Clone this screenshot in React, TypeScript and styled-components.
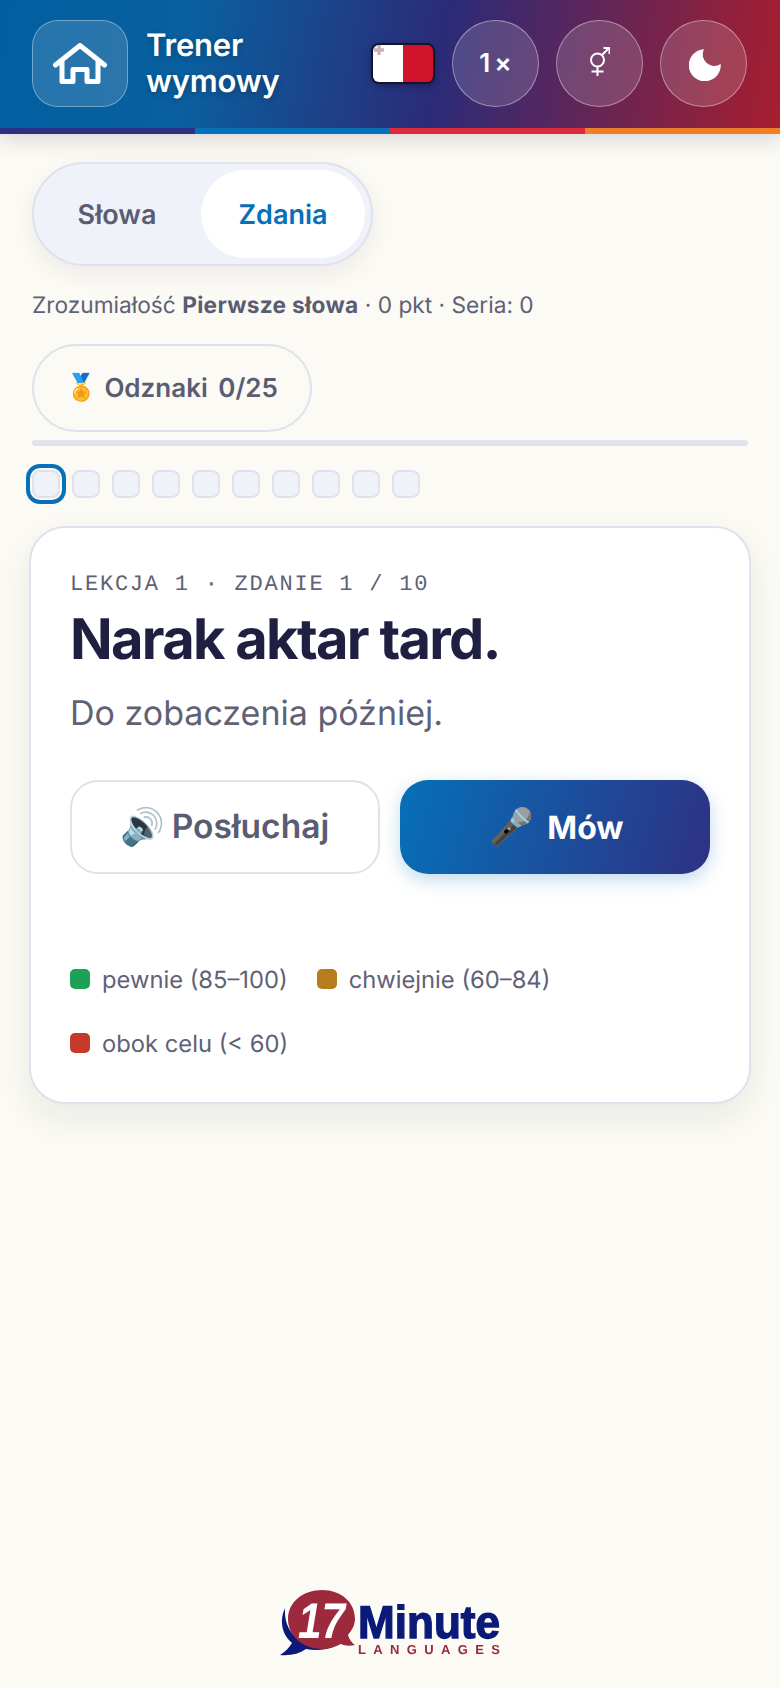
import React from "react";
import styled, { createGlobalStyle } from "styled-components";

const Global = createGlobalStyle`
  html, body { margin: 0; padding: 0; background: #fbfaf4; }
  body { font-family: Inter, "Liberation Sans", sans-serif; width: 780px; height: 1688px; overflow: hidden; text-rendering: geometricPrecision; }
  * { box-sizing: border-box; }
`;

const Page = styled.div`
  width: 780px;
  height: 1688px;
  display: flex;
  flex-direction: column;
  background: #fbfaf4;
`;

const Header = styled.header`
  height: 134px;
  flex: none;
  display: flex;
  flex-direction: column;
  box-shadow: 0 6px 20px rgba(31, 32, 65, 0.16);
`;

const HeaderBar = styled.div`
  height: 128px;
  padding: 20px 33px 21px 32px;
  display: flex;
  align-items: center;
  gap: 18px;
  background: linear-gradient(100deg, #00609f 0%, #0a5f9f 25%, #2b2b78 56%, #a81e2e 100%);
`;

const Stripes = styled.div`
  height: 6px;
  display: grid;
  grid-template-columns: repeat(4, 1fr);
`;

const Stripe = styled.span<{ $c: string }>`
  background: ${(p) => p.$c};
`;

const HomeButton = styled.div`
  width: 96px;
  height: 87px;
  border-radius: 26px;
  border: 1.5px solid rgba(255, 255, 255, 0.35);
  background: rgba(255, 255, 255, 0.14);
  display: flex;
  align-items: center;
  justify-content: center;
  color: #fff;
`;

const Title = styled.div`
  flex: 1;
  color: #fff;
  font-size: 31px;
  font-weight: 600;
  line-height: 36px;
  letter-spacing: -0.2px;
  text-shadow: 0 2px 6px rgba(0, 0, 0, 0.25);
`;

const Controls = styled.div`
  display: flex;
  align-items: center;
  gap: 17px;
`;

const Flag = styled.div`
  position: relative;
  width: 64px;
  height: 41px;
  border: 2px solid #14142c;
  border-radius: 8px;
  overflow: hidden;
  display: grid;
  grid-template-columns: 1fr 1fr;
  box-shadow: 0 2px 6px rgba(0, 0, 0, 0.3);
`;

const FlagWhite = styled.span`
  background: #fff;
`;

const FlagRed = styled.span`
  background: #cf142b;
`;

const GeorgeCross = styled.svg`
  position: absolute;
  left: 1px;
  top: 0;
`;

const RoundButton = styled.div`
  width: 87px;
  height: 87px;
  border-radius: 50%;
  border: 1.5px solid rgba(255, 255, 255, 0.38);
  background: rgba(255, 255, 255, 0.15);
  color: #fff;
  display: flex;
  align-items: center;
  justify-content: center;
  font-size: 26px;
  font-weight: 600;
  letter-spacing: 4px;
  padding-left: 4px;
`;

const IconRoundButton = styled(RoundButton)`
  padding-left: 0;
`;

const GenderSvg = styled.svg`
  margin-bottom: 4px;
`;

const MoonSvg = styled.svg`
  margin: 3px 0 0 3px;
`;

const Main = styled.main`
  padding: 28px 32px 0;
  display: flex;
  flex-direction: column;
  align-items: flex-start;
  flex: 1;
`;

const Toggle = styled.div`
  width: 341px;
  height: 104px;
  border-radius: 52px;
  border: 2px solid #e0e1ed;
  background: #f0f2f9;
  padding: 6px;
  display: flex;
  box-shadow: 0 8px 24px rgba(31, 32, 65, 0.07);
`;

const ToggleItem = styled.div<{ $active?: boolean }>`
  flex: ${(p) => (p.$active ? "0 0 164px" : "1")};
  padding-right: ${(p) => (p.$active ? "0" : "7px")};
  border-radius: 44px;
  display: flex;
  align-items: center;
  justify-content: center;
  font-size: 27px;
  font-weight: 600;
  color: ${(p) => (p.$active ? "#0670b8" : "#5a5d72")};
  background: ${(p) => (p.$active ? "#fff" : "transparent")};
`;

const Status = styled.p`
  margin: 24px 0 0;
  height: 32px;
  font-size: 22.7px;
  line-height: 32px;
  color: #5f6175;
  strong { font-weight: 700; color: #5a5d72; letter-spacing: 0.3px; }
`;

const BadgeButton = styled.div`
  margin-top: 22px;
  height: 88px;
  width: 280px;
  border: 2px solid #e0e1ed;
  border-radius: 44px;
  display: flex;
  align-items: center;
  padding-left: 31px;
  gap: 7px;
  font-size: 26px;
  font-weight: 600;
  color: #5a5d72;
  word-spacing: 4px;
`;

const Emoji = styled.span<{ $size: number }>`
  font-family: "Noto Color Emoji", sans-serif;
  font-size: ${(p) => p.$size}px;
  font-weight: 400;
  line-height: 1;
`;

const Progress = styled.div`
  margin-top: 8px;
  width: 716px;
  height: 6px;
  border-radius: 3px;
  background: #e2e2ec;
`;

const Dots = styled.div`
  margin-top: 24px;
  display: flex;
  gap: 12px;
`;

const Dot = styled.span<{ $current?: boolean }>`
  width: 28px;
  height: 28px;
  border-radius: 8px;
  border: 2px solid #e0e1ed;
  background: #f0f2f9;
  ${(p) => p.$current && "outline: 4px solid #0670b8; outline-offset: 2px;"}
`;

const Card = styled.section`
  margin: 28px 0 0 -3px;
  width: 722px;
  height: 578px;
  background: #fff;
  border: 2px solid #e0e1ed;
  border-radius: 36px;
  padding: 44px 39px;
  box-shadow: 0 14px 36px rgba(31, 32, 65, 0.08);
`;

const Overline = styled.div`
  font-family: "Liberation Mono", monospace;
  font-size: 22px;
  line-height: 26px;
  letter-spacing: 1.76px;
  color: #5f6175;
`;

const Phrase = styled.h1`
  margin: 7px 0 0;
  font-size: 56px;
  line-height: 68px;
  font-weight: 700;
  letter-spacing: -1.7px;
  color: #1f2041;
`;

const Translation = styled.p`
  margin: 19px 0 0;
  font-size: 34px;
  line-height: 44px;
  color: #5f6175;
`;

const Actions = styled.div`
  margin-top: 44px;
  display: grid;
  grid-template-columns: 1fr 1fr;
  gap: 20px;
`;

const ActionButton = styled.div<{ $primary?: boolean }>`
  height: 94px;
  border-radius: 28px;
  display: flex;
  align-items: center;
  justify-content: center;
  gap: ${(p) => (p.$primary ? "13px" : "6px")};
  padding-left: ${(p) => (p.$primary ? "3px" : "0")};
  font-size: ${(p) => (p.$primary ? "32px" : "33.5px")};
  font-weight: ${(p) => (p.$primary ? 700 : 600)};
  color: ${(p) => (p.$primary ? "#fff" : "#5a5d72")};
  background: ${(p) => (p.$primary ? "linear-gradient(105deg, #0670b8, #2e3184)" : "#fff")};
  border: ${(p) => (p.$primary ? "none" : "2px solid #e0e1ed")};
  box-shadow: ${(p) => (p.$primary ? "0 6px 18px rgba(6, 112, 184, 0.25)" : "none")};
`;

const Legend = styled.div`
  margin-top: 89px;
  display: flex;
  flex-wrap: wrap;
  row-gap: 32px;
  column-gap: 29px;
`;

const LegendItem = styled.div`
  display: flex;
  align-items: center;
  gap: 12px;
  height: 32px;
  font-size: 23.75px;
  color: #5f6175;
`;

const Swatch = styled.i<{ $c: string }>`
  width: 20px;
  height: 20px;
  border-radius: 5px;
  background: ${(p) => p.$c};
`;

const Footer = styled.footer`
  height: 136px;
  flex: none;
  padding-top: 33px;
  display: flex;
  justify-content: center;
`;

const Logo = styled.svg`
  width: 240px;
  height: 80px;
  filter: drop-shadow(0 0 3px #fff);
`;

const LogoNum = styled.text`
  font-family: "Liberation Sans", sans-serif;
  font-weight: 700;
  font-style: italic;
  font-size: 50px;
  fill: #fff;
`;

const LogoWord = styled.text`
  font-family: "Liberation Sans", sans-serif;
  font-weight: 700;
  font-size: 46px;
  fill: #0b1a78;
  stroke: #0b1a78;
  stroke-width: 1.4px;
`;

const LogoSub = styled.text`
  font-family: "Liberation Sans", sans-serif;
  font-weight: 700;
  font-size: 13px;
  fill: #9c2a3c;
`;

const HomeIcon = () => (
  <svg width="54" height="41" viewBox="0 0 54 41" fill="none" stroke="currentColor" strokeWidth="5" strokeLinecap="round" strokeLinejoin="round">
    <path d="M2.5 22 27 2.5 51.5 22" />
    <path d="M9 19v19.5h11v-12h14v12h11V19" />
  </svg>
);

const GenderIcon = () => (
  <GenderSvg width="20" height="29" viewBox="0 0 20 29" fill="none" stroke="#fff" strokeWidth="2">
    <circle cx="7.5" cy="13" r="6.5" />
    <path d="M7.5 19.5V29M1.5 24.5h12M12 8l7-7M13.5 1h6v6" />
  </GenderSvg>
);

const MoonIcon = () => (
  <MoonSvg width="32" height="32" viewBox="0 0 32 32">
    <path fill="#fff" d="M15 .3A16 16 0 1 0 31.7 15 11.5 11.5 0 0 1 15 .3Z" />
  </MoonSvg>
);

const FooterLogo = () => (
  <Logo viewBox="0 0 240 80">
    <path fill="#0b1a78" d="M15 23C9 36 12 50 22 58c-3 5-7 9-12 12 10 1 19-1 26-6 10 2 21 1 29-3-20 4-52-4-50-38Z" />
    <path fill="#9c2a3c" d="M52 5C33 5 18 17 18 34s15 30 34 30c7 0 13-2 19-5 4 2 9 2 14 1-3-2-6-6-7-10 4-5 7-10 7-16C85 17 71 5 52 5Z" />
    <LogoNum x="28" y="53" textLength="47" lengthAdjust="spacingAndGlyphs">17</LogoNum>
    <LogoWord x="88" y="53" textLength="142" lengthAdjust="spacingAndGlyphs">Minute</LogoWord>
    <LogoSub x="88" y="69" textLength="142">LANGUAGES</LogoSub>
  </Logo>
);

export default function App() {
  const dots = Array.from({ length: 10 }, (_, i) => i);
  return (
    <Page>
      <Global />
      <Header>
        <HeaderBar>
          <HomeButton><HomeIcon /></HomeButton>
          <Title>Trener<br />wymowy</Title>
          <Controls>
            <Flag>
              <FlagWhite />
              <FlagRed />
              <GeorgeCross width="10" height="10" viewBox="0 0 12 12">
                <path d="M4 0h4v4h4v4H8v4H4V8H0V4h4Z" fill="#c9b3b6" />
              </GeorgeCross>
            </Flag>
            <RoundButton>1×</RoundButton>
            <IconRoundButton><GenderIcon /></IconRoundButton>
            <IconRoundButton><MoonIcon /></IconRoundButton>
          </Controls>
        </HeaderBar>
        <Stripes>
          <Stripe $c="#2e2f80" />
          <Stripe $c="#0670b8" />
          <Stripe $c="#dc2a3c" />
          <Stripe $c="#ee7f27" />
        </Stripes>
      </Header>
      <Main>
        <Toggle>
          <ToggleItem>Słowa</ToggleItem>
          <ToggleItem $active>Zdania</ToggleItem>
        </Toggle>
        <Status>Zrozumiałość <strong>Pierwsze słowa</strong> · 0 pkt · Seria: 0</Status>
        <BadgeButton><Emoji $size={26}>🏅</Emoji> Odznaki 0/25</BadgeButton>
        <Progress />
        <Dots>
          {dots.map((d) => <Dot key={d} $current={d === 0} />)}
        </Dots>
        <Card>
          <Overline>LEKCJA 1 · ZDANIE 1 / 10</Overline>
          <Phrase>Narak aktar tard.</Phrase>
          <Translation>Do zobaczenia później.</Translation>
          <Actions>
            <ActionButton><Emoji $size={36}>🔊</Emoji> Posłuchaj</ActionButton>
            <ActionButton $primary><Emoji $size={36}>🎤</Emoji> Mów</ActionButton>
          </Actions>
          <Legend>
            <LegendItem><Swatch $c="#1fa058" />pewnie (85–100)</LegendItem>
            <LegendItem><Swatch $c="#b77c1e" />chwiejnie (60–84)</LegendItem>
            <LegendItem><Swatch $c="#c43a2b" />obok celu (&lt; 60)</LegendItem>
          </Legend>
        </Card>
      </Main>
      <Footer><FooterLogo /></Footer>
    </Page>
  );
}
